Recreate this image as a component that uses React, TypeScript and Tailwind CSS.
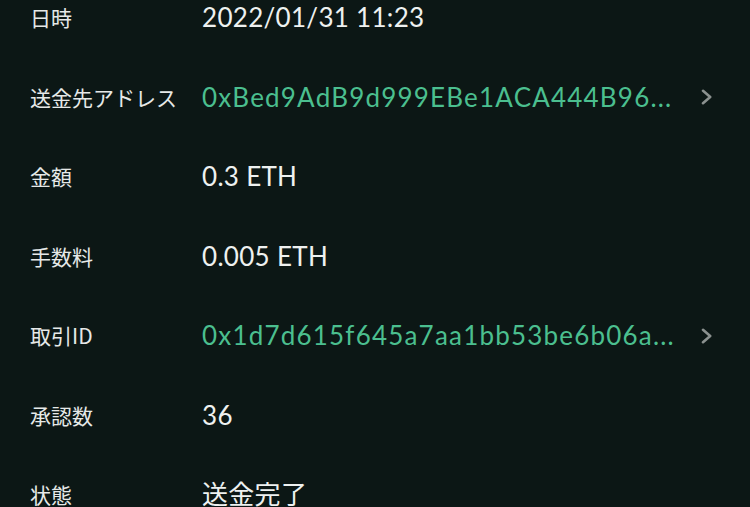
// 取引詳細の行データ
const rows = [
  { label: "日時", value: "2022/01/31 11:23" },
  { label: "送金先アドレス", value: "0xBed9AdB9d999EBe1ACA444B96...", link: true },
  { label: "金額", value: "0.3 ETH" },
  { label: "手数料", value: "0.005 ETH" },
  { label: "取引ID", value: "0x1d7d615f645a7aa1bb53be6b06a...", link: true },
  { label: "承認数", value: "36" },
  { label: "状態", value: "送金完了" },
];

const Chevron = () => (
  <svg viewBox="0 0 12 16" className="w-[12px] h-[16px] shrink-0 text-[#8b918f]" fill="none">
    <path d="M2 1.8 L9.2 8 L2 14.2" stroke="currentColor" strokeWidth={2.6} strokeLinecap="round" strokeLinejoin="round" />
  </svg>
);

export default function App() {
  return (
    <div
      className="w-[750px] h-[507px] overflow-hidden bg-[#0c1715] text-white"
      style={{ fontFamily: 'Lato, "Noto Sans CJK JP", sans-serif' }}
    >
      <div className="-mt-[22px] flex flex-col">
        {rows.map((r) => (
          <div key={r.label} className="h-[79.5px] flex items-center pl-[30px] pr-[37px]">
            <div
              className="w-[172px] shrink-0 text-[21px] text-[#e6e9e8]"
              style={{ fontFamily: '"Noto Sans CJK JP", sans-serif' }}
            >
              {r.label}
            </div>
            <div
              className={`flex-1 text-[26px] whitespace-nowrap ${
                r.link ? "text-[#4bbf8f] tracking-[1.2px]" : "text-[#eef1f0] tracking-[0.3px]"
              }`}
            >
              {r.value}
            </div>
            {r.link && <Chevron />}
          </div>
        ))}
      </div>
    </div>
  );
}
